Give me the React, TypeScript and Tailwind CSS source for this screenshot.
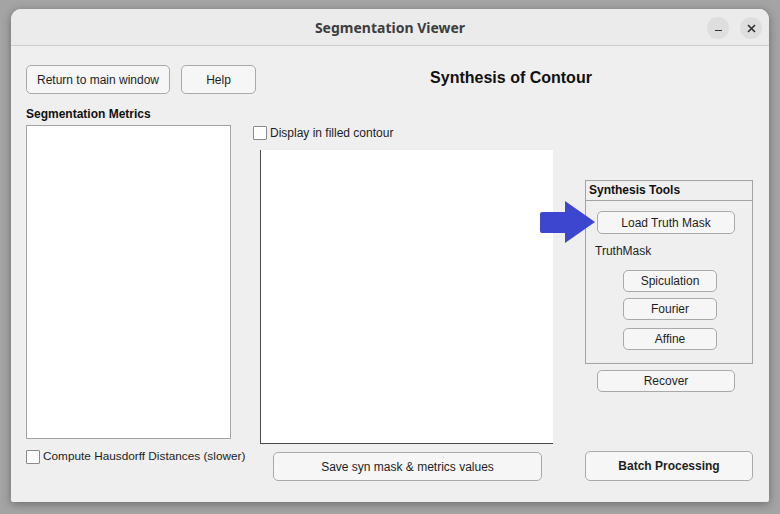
import React from "react";

const font = { fontFamily: '"Liberation Sans", Arial, sans-serif' };

function Btn({ children, className = "" }: { children: React.ReactNode; className?: string }) {
  return (
    <div
      className={
        "flex items-center justify-center rounded-[5px] border border-[#a9a9a9] bg-[#f6f6f6] text-[12px] text-[#1e1e1e] " +
        className
      }
    >
      {children}
    </div>
  );
}

function Check() {
  return <div className="h-[14px] w-[14px] shrink-0 rounded-[1px] border border-[#8a8a8a] bg-white" />;
}

export default function App() {
  return (
    <div className="h-[514px] w-[780px] overflow-hidden bg-[#a4a4a4] pl-[11px] pt-[9px]" style={font}>
      <div className="flex h-[493px] w-[758px] flex-col overflow-hidden rounded-t-[10px] rounded-b-[2px] bg-[#efefef] shadow-[0_2px_10px_rgba(0,0,0,0.35)]">
        {/* title bar */}
        <div className="relative flex h-[37px] shrink-0 items-center justify-center border-b border-[#cdcdcd] bg-[#ebebeb]">
          <span
            className="text-[14px] font-bold text-[#3d3d3d]"
            style={{ fontFamily: '"Noto Sans", "DejaVu Sans", sans-serif' }}
          >
            Segmentation Viewer
          </span>
          <div className="absolute right-[7px] top-[8px] flex gap-[11px]">
            <div className="flex h-[22px] w-[22px] items-center justify-center rounded-full bg-[#dedede]">
              <div className="mt-[5px] h-[1.5px] w-[7px] bg-[#333]" />
            </div>
            <div className="flex h-[22px] w-[22px] items-center justify-center rounded-full bg-[#dedede]">
              <svg width="9" height="9" viewBox="0 0 9 9">
                <path d="M1 1L8 8M8 1L1 8" stroke="#2e2e2e" strokeWidth="1.6" />
              </svg>
            </div>
          </div>
        </div>

        {/* content */}
        <div className="flex flex-1 flex-col pl-[15px]">
          {/* top row */}
          <div className="mt-[19px] flex h-[29px] items-center">
            <Btn className="h-[29px] w-[144px]">Return to main window</Btn>
            <Btn className="ml-[11px] h-[29px] w-[75px]">Help</Btn>
            <div className="mr-[3px] flex flex-1 justify-center">
              <span className="-mt-[4px] text-[16px] font-bold text-[#111]">Synthesis of Contour</span>
            </div>
          </div>

          {/* main */}
          <div className="mt-[10px] flex">
            {/* col A */}
            <div className="flex w-[227px] flex-col">
              <div className="mt-[2px] h-[16px] text-[12px] font-bold leading-[16px] text-[#111]">Segmentation Metrics</div>
              <div className="mt-[3px] h-[314px] w-[205px] border border-[#a3a3a3] bg-white" />
              <div className="mt-[9px] flex items-center gap-[3px]">
                <Check />
                <span className="text-[11.8px] text-[#1e1e1e]">Compute Hausdorff Distances (slower)</span>
              </div>
            </div>

            {/* col B */}
            <div className="flex w-[332px] flex-col">
              <div className="mt-[22px] flex h-[14px] items-center gap-[3px]">
                <Check />
                <span className="text-[12px] text-[#1e1e1e]">Display in filled contour</span>
              </div>
              <div className="ml-[7px] mt-[10px] h-[294px] w-[293px] border-b border-l border-[#4a4a4a] bg-white" />
              <Btn className="ml-[20px] mt-[8px] h-[29px] w-[269px]">Save syn mask &amp; metrics values</Btn>
            </div>

            {/* col C */}
            <div className="relative flex w-[168px] flex-col">
              <svg
                className="absolute left-[-45px] top-[96px]"
                width="56"
                height="44"
                viewBox="0 0 56 44"
              >
                <path
                  d="M2 12 H25 V1 L55 22 L25 43 V33 H2 Q0 33 0 31 V14 Q0 12 2 12 Z"
                  fill="#3d46cf"
                />
              </svg>
              <div className="mt-[76px] flex h-[184px] flex-col border border-[#a3a3a3]">
                <div className="h-[20px] border-b border-[#a3a3a3] pl-[3px] text-[12px] font-bold leading-[18px] text-[#111]">
                  Synthesis Tools
                </div>
                <Btn className="relative ml-[11px] mt-[10px] h-[23px] w-[138px]">Load Truth Mask</Btn>
                <div className="ml-[9px] mt-[9px] h-[16px] text-[12px] leading-[16px] text-[#1e1e1e]">TruthMask</div>
                <Btn className="ml-[37px] mt-[11px] h-[22px] w-[94px]">Spiculation</Btn>
                <Btn className="ml-[37px] mt-[6px] h-[22px] w-[94px]">Fourier</Btn>
                <Btn className="ml-[37px] mt-[8px] h-[22px] w-[94px]">Affine</Btn>
              </div>
              <Btn className="ml-[12px] mt-[6px] h-[22px] w-[138px]">Recover</Btn>
              <Btn className="mt-[59px] h-[30px] w-[168px] font-bold">Batch Processing</Btn>
            </div>
          </div>
        </div>
      </div>
    </div>
  );
}
